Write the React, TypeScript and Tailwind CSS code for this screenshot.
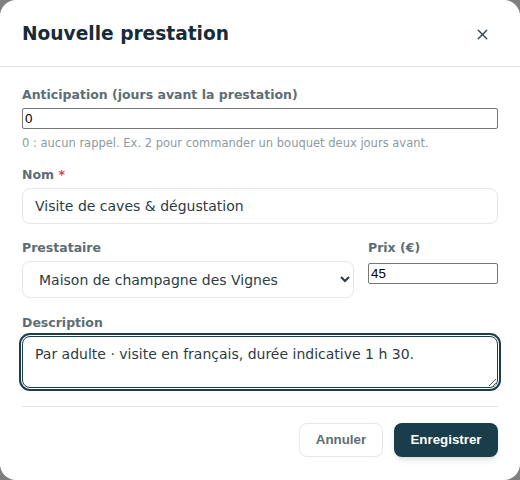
import { X } from "lucide-react";

export default function App() {
  return (
    <div className="w-[520px] h-[480px] bg-[#7f7f7f] font-['DejaVu_Sans',sans-serif]">
      <div className="h-full w-full rounded-2xl bg-white flex flex-col">
        {/* En-tête */}
        <div className="h-[67px] shrink-0 flex items-center justify-between px-[22px] pt-[2px] border-b border-[#dfe6e8]">
          <h2 className="text-[18.6px] font-bold text-[#172b38] leading-none">Nouvelle prestation</h2>
          <button className="w-8 h-8 flex items-center justify-center text-[#2d4a5a]">
            <X size={17} strokeWidth={1.9} />
          </button>
        </div>

        {/* Formulaire */}
        <div className="px-[22px] pt-[19px] flex flex-col">
          <label className="block text-[12.5px] leading-[18px] font-bold text-[#5d6d75] mb-[4px]">
            Anticipation (jours avant la prestation)
          </label>
          <input
            defaultValue="0"
            className="h-[21px] w-full border border-[#767676] rounded-[2px] px-[2px] font-['Liberation_Sans',sans-serif] text-[13.33px] text-black"
          />
          <p className="mt-[7px] text-[11.5px] leading-[15px] text-[#8d9a9f]">
            0 : aucun rappel. Ex. 2 pour commander un bouquet deux jours avant.
          </p>

          <label className="mt-[15px] block text-[12.5px] leading-[18px] font-bold text-[#5d6d75] mb-[4px]">
            Nom <span className="text-[#d9413a]">*</span>
          </label>
          <input
            defaultValue="Visite de caves & dégustation"
            className="h-[36px] w-full rounded-lg border border-[#e3e8ea] px-3 text-[14px] text-[#2d3b45]"
          />

          <div className="mt-[15px] grid grid-cols-[1fr_130px] gap-[14px]">
            <div>
              <label className="block text-[12.5px] leading-[18px] font-bold text-[#5d6d75] mb-[4px]">Prestataire</label>
              <select
                defaultValue="vignes"
                className="h-[37px] w-full rounded-lg border border-[#e3e8ea] bg-white px-3 text-[14px] text-[#2d3b45]"
              >
                <option value="vignes">Maison de champagne des Vignes</option>
              </select>
            </div>
            <div>
              <label className="block text-[12.5px] leading-[18px] font-bold text-[#5d6d75] mb-[4px]">Prix (€)</label>
              <input
                defaultValue="45"
                className="h-[21px] w-full border border-[#767676] rounded-[2px] px-[2px] font-['Liberation_Sans',sans-serif] text-[13.33px] text-black"
              />
            </div>
          </div>

          <label className="mt-[16px] block text-[12.5px] leading-[18px] font-bold text-[#5d6d75] mb-[4px]">Description</label>
          <textarea
            defaultValue="Par adulte · visite en français, durée indicative 1 h 30."
            className="h-[52px] w-full rounded-lg border border-[#1a3d4c] outline-2 outline-solid outline-[#1a3d4c] outline-offset-1 px-3 py-[7px] text-[14px] leading-5 text-[#2d3b45]"
          />

          <div className="mt-[18px] border-t border-[#dfe6e8]" />

          <div className="mt-[16px] flex justify-end gap-[11px]">
            <button className="h-[34px] w-[84px] rounded-lg border border-[#e3e8ea] bg-white font-['Liberation_Sans',sans-serif] text-[13.33px] font-bold text-[#5d6d75]">
              Annuler
            </button>
            <button className="h-[34px] w-[104px] rounded-lg bg-[#1a3d4c] shadow-md font-['Liberation_Sans',sans-serif] text-[13.33px] font-bold text-white">
              Enregistrer
            </button>
          </div>
        </div>
      </div>
    </div>
  );
}
